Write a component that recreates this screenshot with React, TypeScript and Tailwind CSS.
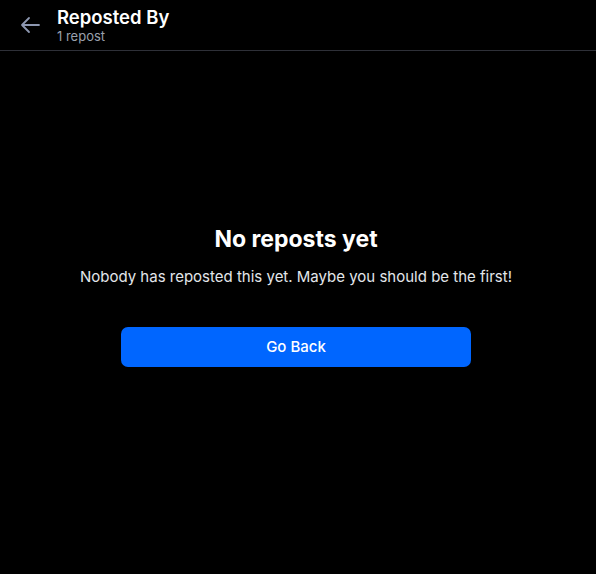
export default function App() {
  return (
    <div
      className="w-[596px] h-[574px] bg-black text-white flex flex-col"
      style={{ fontFamily: "Inter, 'Liberation Sans', sans-serif" }}
    >
      {/* Header */}
      <div className="h-[51px] flex items-center border-b border-[#2e3038] px-[18px] gap-[15px]">
        <svg width="24" height="24" viewBox="0 0 24 24" fill="none" stroke="#8d97b0" strokeWidth="1.8" strokeLinecap="round" strokeLinejoin="round">
          <path d="M21 12H4M11 5l-7 7 7 7" />
        </svg>
        <div className="flex flex-col">
          <span className="text-[18.5px] font-semibold leading-[22px]">Reposted By</span>
          <span className="text-[13px] leading-[16px] text-[#9aa0ad]">1 repost</span>
        </div>
      </div>

      {/* Empty state */}
      <div className="w-[592px] flex flex-col items-center pt-[173px]">
        <h2 className="text-[23px] font-bold leading-[30px]">No reposts yet</h2>
        <p className="mt-[13px] text-[15px] leading-[20px] text-[#e3e6ea]">
          Nobody has reposted this yet. Maybe you should be the first!
        </p>
        <button className="mt-[40px] w-[350px] h-[40px] rounded-[7px] bg-[#0066ff] text-[15px] font-medium text-white">
          Go Back
        </button>
      </div>
    </div>
  );
}
